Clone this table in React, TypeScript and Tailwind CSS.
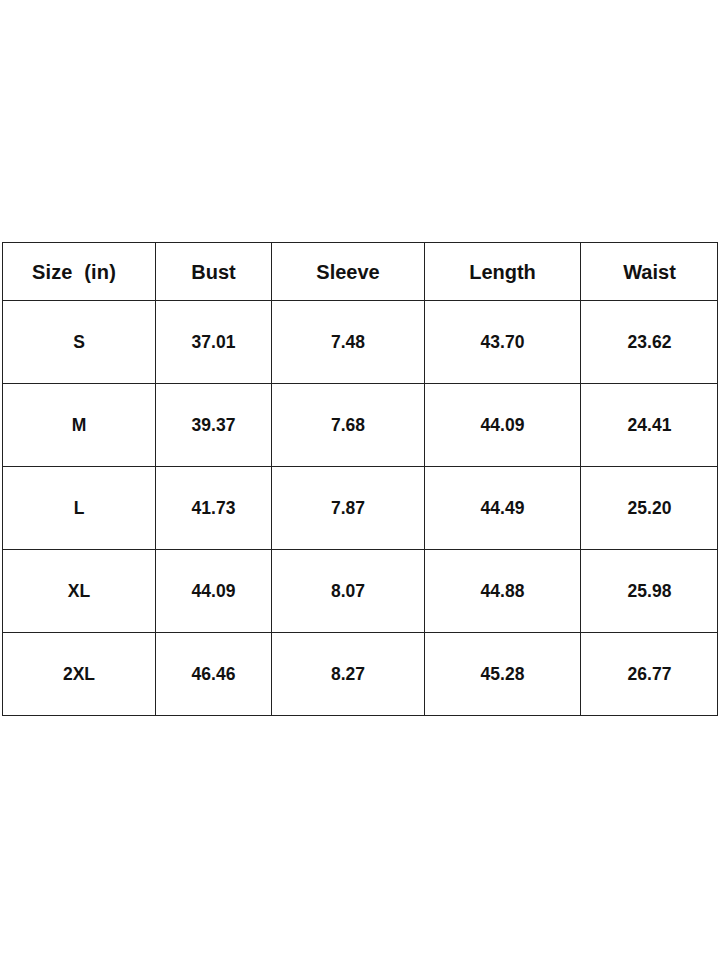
const headers = ['Size\u00a0\u00a0(in)', 'Bust', 'Sleeve', 'Length', 'Waist'];

const rows = [
  ['S', '37.01', '7.48', '43.70', '23.62'],
  ['M', '39.37', '7.68', '44.09', '24.41'],
  ['L', '41.73', '7.87', '44.49', '25.20'],
  ['XL', '44.09', '8.07', '44.88', '25.98'],
  ['2XL', '46.46', '8.27', '45.28', '26.77'],
];

export default function App() {
  return (
    <div className="w-[720px] h-[960px] bg-white font-['Liberation_Sans',Arial,sans-serif] font-bold text-[#111]">
      <div className="pt-[242px] pl-[2px]">
        <div className="w-[716px] grid grid-cols-[153px_116px_153px_156px_138px] border-r border-b border-[#222]">
          {headers.map((h, i) => (
            <div
              key={h}
              className={
                i === 0
                  ? 'h-[58px] flex items-center justify-center border-l border-t border-[#222] text-[20px] pr-[10px] tracking-[0.2px]'
                  : 'h-[58px] flex items-center justify-center border-l border-t border-[#222] text-[20px]'
              }
            >
              {h}
            </div>
          ))}
          {rows.map((r) =>
            r.map((c, i) => (
              <div
                key={r[0] + i}
                className="h-[83px] flex items-center justify-center border-l border-t border-[#222] text-[17.5px]"
              >
                {c}
              </div>
            ))
          )}
        </div>
      </div>
    </div>
  );
}
